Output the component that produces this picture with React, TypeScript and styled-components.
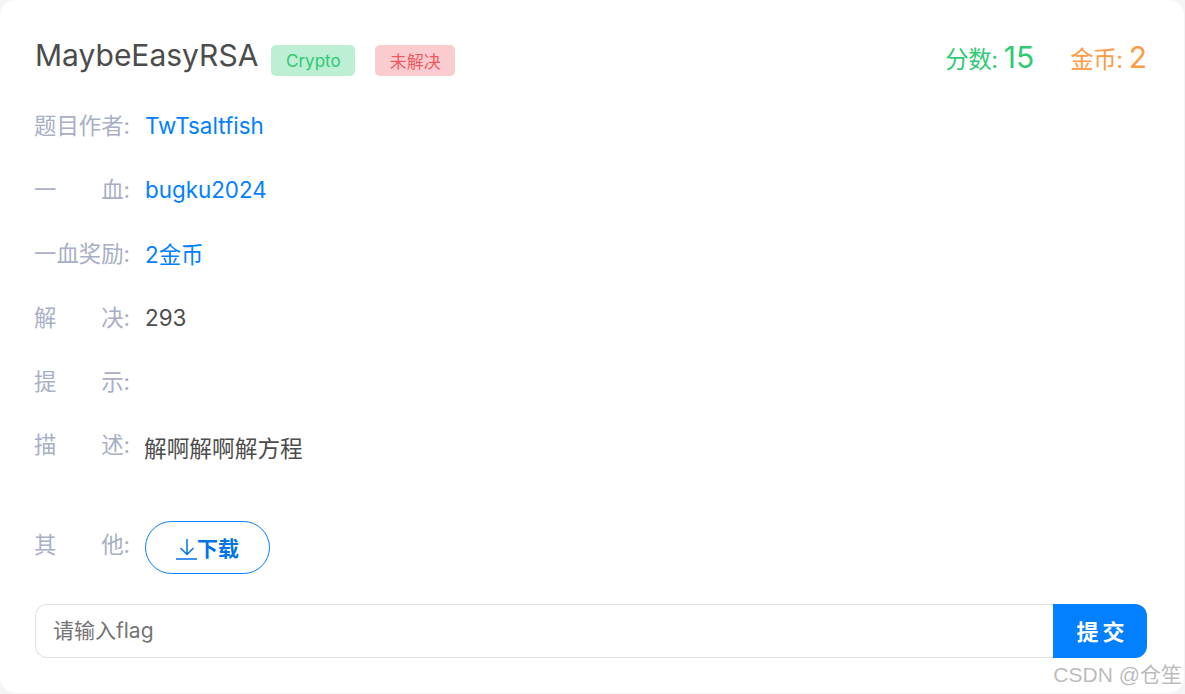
import React from 'react';
import styled, { createGlobalStyle } from 'styled-components';

const GlobalStyle = createGlobalStyle`
  html, body { margin: 0; padding: 0; background: #f4f4f6; }
  body { font-family: Inter, "Noto Sans CJK SC", sans-serif; }
`;

const Card = styled.div`
  box-sizing: border-box;
  width: 1184px;
  height: 693px;
  padding: 36px 37px 0 35px;
  background: #fff;
  border-radius: 16px;
  overflow: hidden;
  position: relative;
`;

const Header = styled.div`
  display: flex;
  align-items: center;
  justify-content: space-between;
  height: 38px;
  margin-bottom: 19px;
`;

const TitleGroup = styled.div`
  display: flex;
  align-items: center;
`;

const Title = styled.h1`
  margin: 0 13px 0 0;
  font-size: 30px;
  font-weight: 400;
  line-height: 38px;
  color: #4c4c4c;
`;

const Tag = styled.span<{ $bg: string; $fg: string; $w: number; $mr?: number }>`
  display: inline-flex;
  align-items: center;
  justify-content: center;
  box-sizing: border-box;
  width: ${p => p.$w}px;
  height: 31px;
  margin-top: 11px;
  margin-right: ${p => p.$mr ?? 0}px;
  border-radius: 5px;
  font-size: 17px;
  background: ${p => p.$bg};
  color: ${p => p.$fg};
`;

const Stats = styled.div`
  display: flex;
  align-items: baseline;
  gap: 36px;
  margin-top: 4px;
`;

const Stat = styled.div<{ $color: string }>`
  font-size: 30px;
  color: ${p => p.$color};
  span { font-size: 23.4px; letter-spacing: -0.4px; white-space: pre; }
`;

const Row = styled.div<{ $h?: number; $align?: string }>`
  display: flex;
  align-items: ${p => p.$align ?? 'center'};
  height: ${p => p.$h ?? 64}px;
  font-size: 22.4px;
  color: #4c4c4c;
`;

const Label = styled.div<{ $mt?: number }>`
  display: flex;
  justify-content: space-between;
  width: 96px;
  margin: ${p => p.$mt ?? 2}px 15px 0 -1px;
  flex: none;
  color: #a8afc6;
  font-size: 22.4px;
  line-height: 28px;
  white-space: nowrap;
`;

const Value = styled.a`
  color: #0380ff;
  text-decoration: none;
  font-size: 22.4px;
`;

const Desc = styled.p`
  margin: 21px 0 0 -1px;
  font-size: 22.7px;
  line-height: 30px;
  color: #4c4c4c;
`;

const DownloadBtn = styled.button`
  display: inline-flex;
  align-items: center;
  justify-content: center;
  box-sizing: border-box;
  width: 125px;
  height: 53px;
  margin-top: 13px;
  border: 1px solid #0380ff;
  border-radius: 27px;
  background: #fff;
  color: #0073e6;
  font-family: inherit;
  font-size: 21px;
  font-weight: 700;
  padding: 0 0 1px;
  svg { margin: 1px -1px 0 0; }
`;

const SubmitRow = styled.div`
  display: flex;
  height: 54px;
  margin-top: 18px;
`;

const FlagInput = styled.input`
  flex: 1;
  min-width: 0;
  box-sizing: border-box;
  height: 54px;
  padding: 0 17px 2px;
  border: 1px solid #e0e0e0;
  border-right: none;
  border-radius: 12px 0 0 12px;
  outline: none;
  font-family: inherit;
  font-size: 21px;
  &::placeholder { color: #757575; opacity: 1; }
`;

const SubmitBtn = styled.button`
  width: 94px;
  height: 54px;
  border: none;
  border-radius: 0 12px 12px 0;
  background: #0380ff;
  color: #fff;
  font-family: inherit;
  font-size: 22px;
  font-weight: 700;
  letter-spacing: 4px;
  padding: 0 0 2px 5px;
`;

const Watermark = styled.div`
  position: absolute;
  right: 2px;
  bottom: 5px;
  font-family: "Liberation Sans", "Noto Sans CJK SC", sans-serif;
  font-size: 21px;
  color: rgba(120, 120, 120, 0.5);
`;

const DownloadIcon = () => (
  <svg width="22" height="24" viewBox="0 0 22 24" fill="none" stroke="currentColor" strokeWidth="1.5">
    <path d="M11 3v15M4.5 12l6.5 6.5 6.5-6.5M0 23h21" />
  </svg>
);

const Spread = ({ a, b, mt }: { a: string; b: string; mt?: number }) => (
  <Label $mt={mt}><span>{a}</span><span>{b}:</span></Label>
);

export default function App() {
  return (
    <>
      <GlobalStyle />
      <Card>
        <Header>
          <TitleGroup>
            <Title>MaybeEasyRSA</Title>
            <Tag $bg="#bdefd5" $fg="#2ec971" $w={84} $mr={20}>Crypto</Tag>
            <Tag $bg="#fbcccf" $fg="#ee5a5f" $w={80}>未解决</Tag>
          </TitleGroup>
          <Stats>
            <Stat $color="#2ecb72"><span>{'分数: '}</span>15</Stat>
            <Stat $color="#ff9a45"><span>{'金币: '}</span>2</Stat>
          </Stats>
        </Header>
        <Row>
          <Label>题目作者:</Label>
          <Value>TwTsaltfish</Value>
        </Row>
        <Row>
          <Spread a="一" b="血" />
          <Value>bugku2024</Value>
        </Row>
        <Row>
          <Label>一血奖励:</Label>
          <Value>2金币</Value>
        </Row>
        <Row>
          <Spread a="解" b="决" />
          <span>293</span>
        </Row>
        <Row>
          <Spread a="提" b="示" />
        </Row>
        <Row $h={95} $align="flex-start">
          <Spread a="描" b="述" mt={18} />
          <Desc>解啊解啊解方程</Desc>
        </Row>
        <Row $h={78} $align="flex-start">
          <Spread a="其" b="他" mt={23} />
          <DownloadBtn><DownloadIcon />下载</DownloadBtn>
        </Row>
        <SubmitRow>
          <FlagInput placeholder="请输入flag" />
          <SubmitBtn>提交</SubmitBtn>
        </SubmitRow>
        <Watermark>CSDN @仓笙</Watermark>
      </Card>
    </>
  );
}
